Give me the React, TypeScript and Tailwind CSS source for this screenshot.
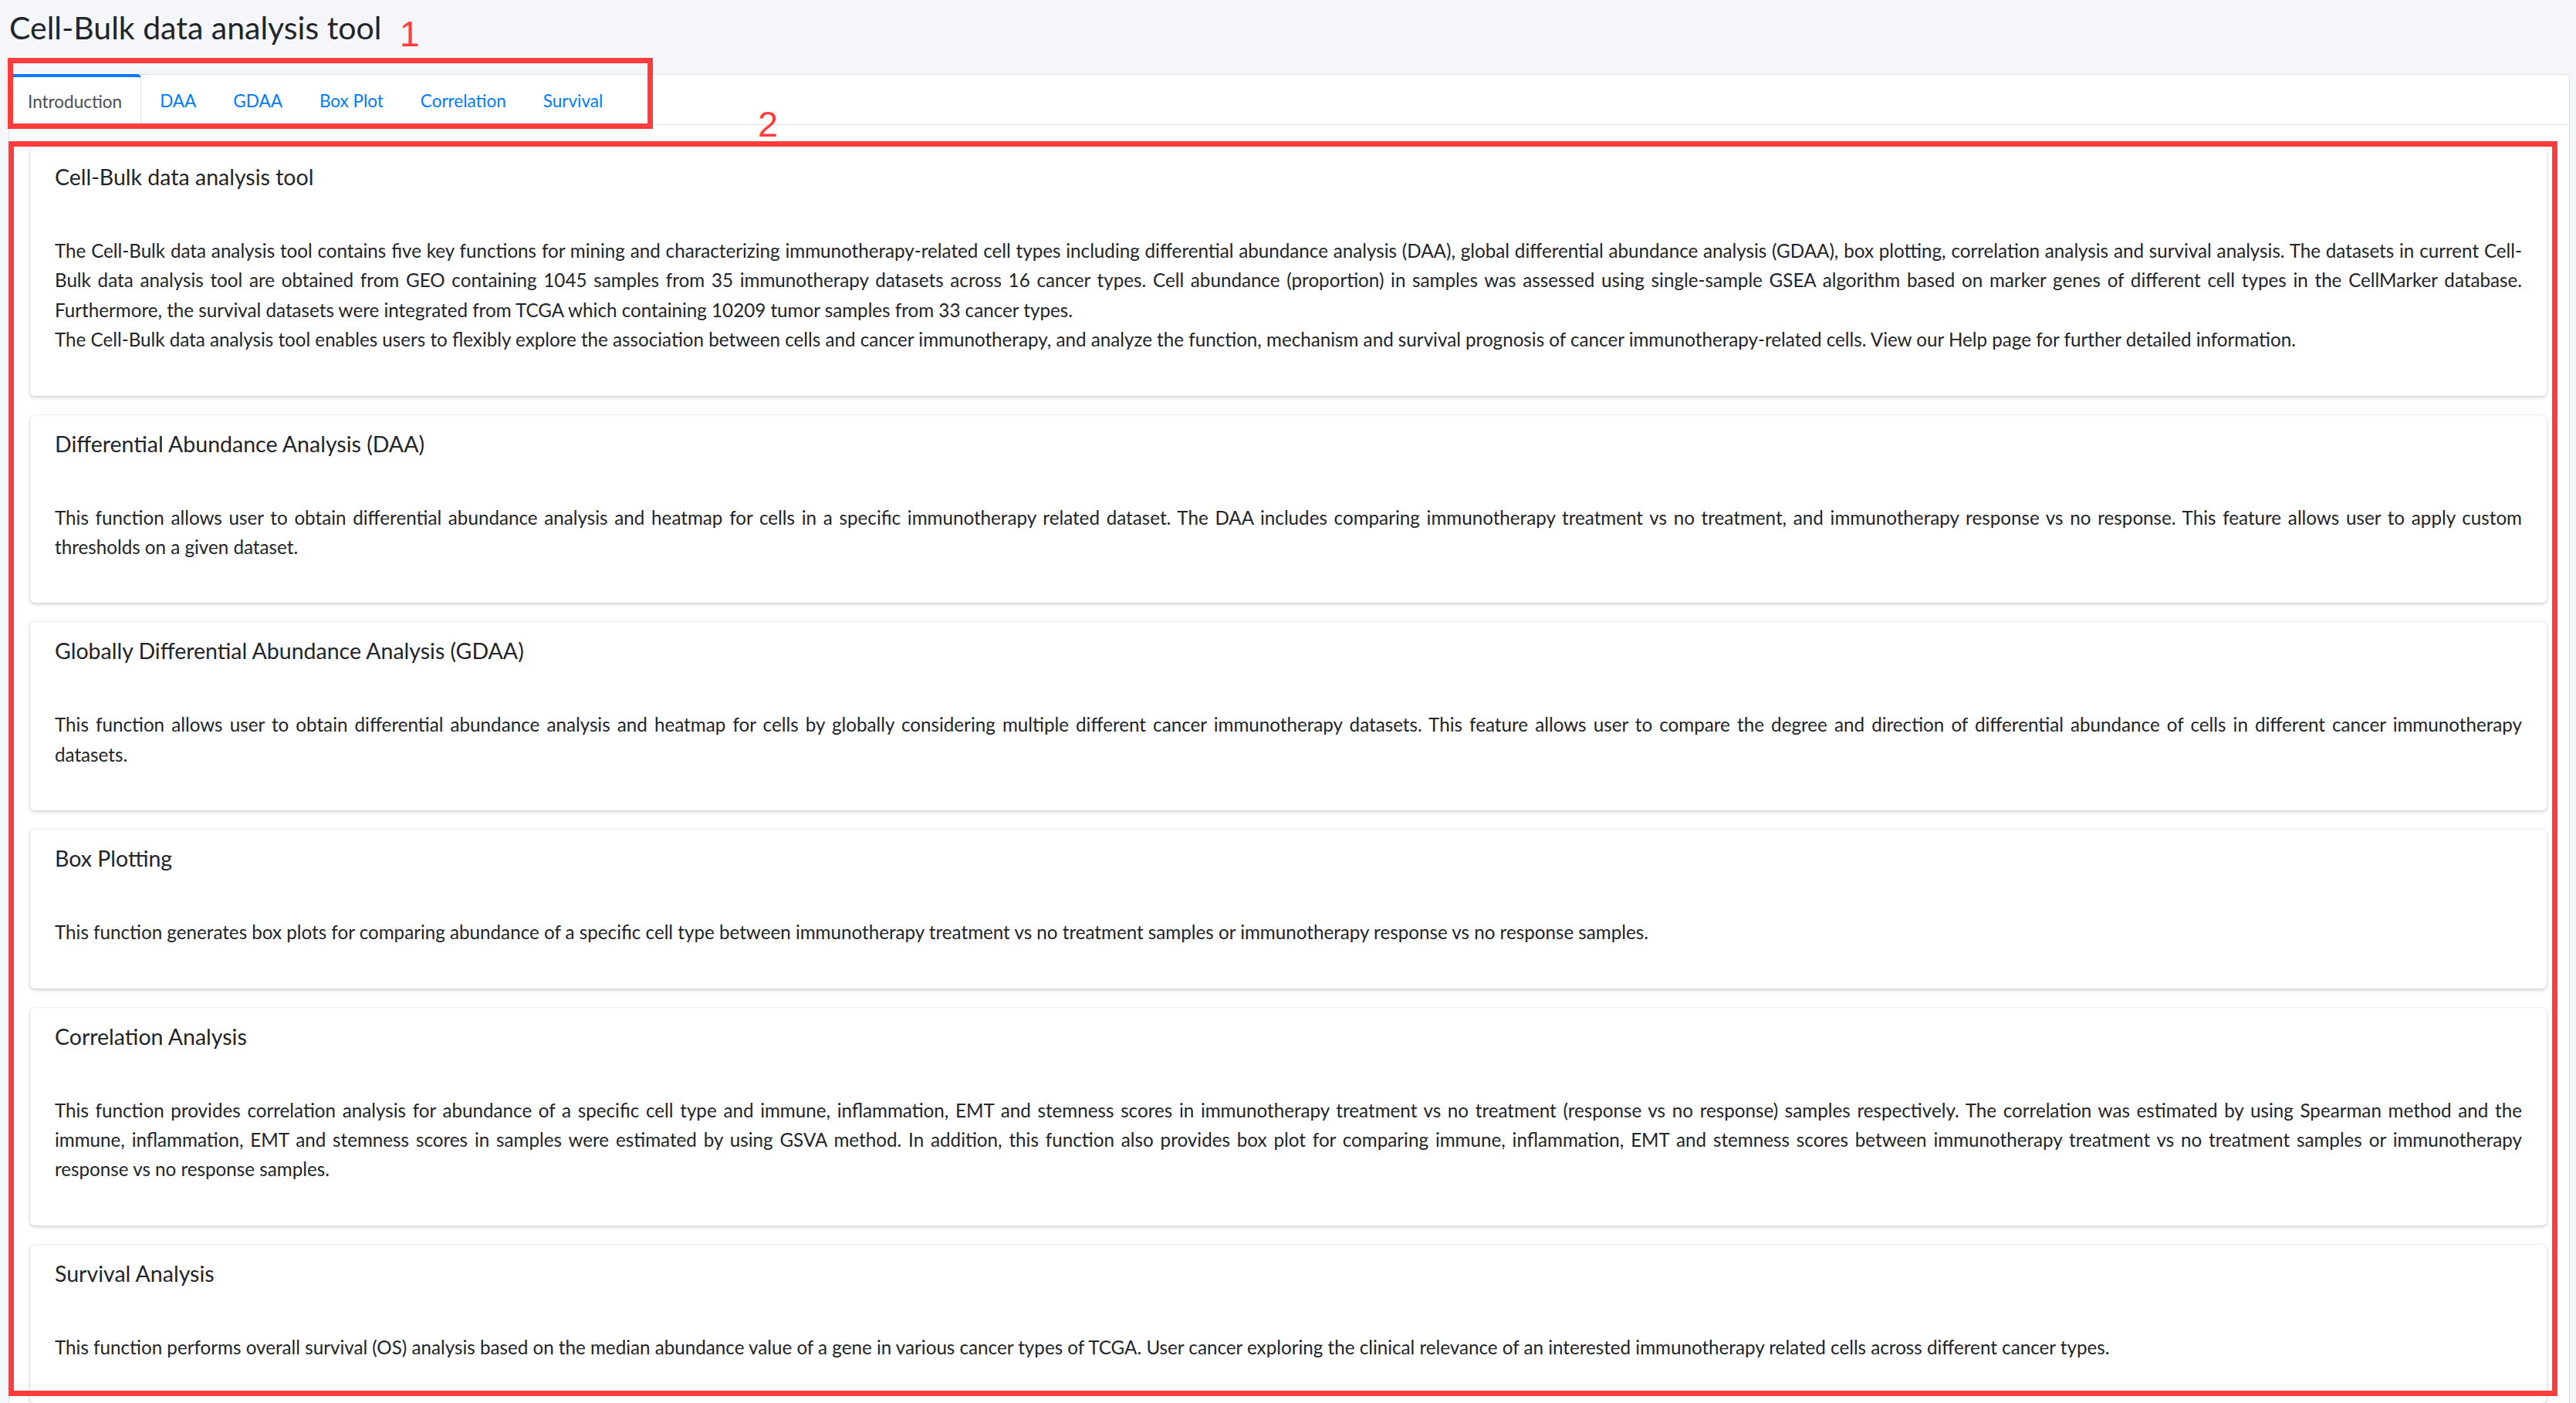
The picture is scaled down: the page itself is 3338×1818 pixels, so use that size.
import React from 'react'

type Card = {
  title: string
  // each paragraph is a list of lines, lines but the last are justified
  paragraphs: string[][]
}

const TABS = ['Introduction', 'DAA', 'GDAA', 'Box Plot', 'Correlation', 'Survival']

const CARDS: Card[] = [
  {
    title: 'Cell-Bulk data analysis tool',
    paragraphs: [
      [
        'The Cell-Bulk data analysis tool contains five key functions for mining and characterizing immunotherapy-related cell types including differential abundance analysis (DAA), global differential abundance analysis (GDAA), box plotting, correlation analysis and survival analysis. The datasets in current Cell-',
        'Bulk data analysis tool are obtained from GEO containing 1045 samples from 35 immunotherapy datasets across 16 cancer types. Cell abundance (proportion) in samples was assessed using single-sample GSEA algorithm based on marker genes of different cell types in the CellMarker database.',
        'Furthermore, the survival datasets were integrated from TCGA which containing 10209 tumor samples from 33 cancer types.',
      ],
      [
        'The Cell-Bulk data analysis tool enables users to flexibly explore the association between cells and cancer immunotherapy, and analyze the function, mechanism and survival prognosis of cancer immunotherapy-related cells. View our Help page for further detailed information.',
      ],
    ],
  },
  {
    title: 'Differential Abundance Analysis (DAA)',
    paragraphs: [
      [
        'This function allows user to obtain differential abundance analysis and heatmap for cells in a specific immunotherapy related dataset. The DAA includes comparing immunotherapy treatment vs no treatment, and immunotherapy response vs no response. This feature allows user to apply custom',
        'thresholds on a given dataset.',
      ],
    ],
  },
  {
    title: 'Globally Differential Abundance Analysis (GDAA)',
    paragraphs: [
      [
        'This function allows user to obtain differential abundance analysis and heatmap for cells by globally considering multiple different cancer immunotherapy datasets. This feature allows user to compare the degree and direction of differential abundance of cells in different cancer immunotherapy',
        'datasets.',
      ],
    ],
  },
  {
    title: 'Box Plotting',
    paragraphs: [
      [
        'This function generates box plots for comparing abundance of a specific cell type between immunotherapy treatment vs no treatment samples or immunotherapy response vs no response samples.',
      ],
    ],
  },
  {
    title: 'Correlation Analysis',
    paragraphs: [
      [
        'This function provides correlation analysis for abundance of a specific cell type and immune, inflammation, EMT and stemness scores in immunotherapy treatment vs no treatment (response vs no response) samples respectively. The correlation was estimated by using Spearman method and the',
        'immune, inflammation, EMT and stemness scores in samples were estimated by using GSVA method. In addition, this function also provides box plot for comparing immune, inflammation, EMT and stemness scores between immunotherapy treatment vs no treatment samples or immunotherapy',
        'response vs no response samples.',
      ],
    ],
  },
  {
    title: 'Survival Analysis',
    paragraphs: [
      [
        'This function performs overall survival (OS) analysis based on the median abundance value of a gene in various cancer types of TCGA. User cancer exploring the clinical relevance of an interested immunotherapy related cells across different cancer types.',
      ],
    ],
  },
]

function InfoCard({ card }: { card: Card }) {
  return (
    <div className="rounded-[6px] bg-white px-[32px] pt-[19px] pb-[53px] shadow-[0_0_2px_rgba(0,0,0,0.14),0_2px_5px_rgba(0,0,0,0.18)]">
      <h4 className="text-[28.5px] leading-[36px] text-[#212529]">{card.title}</h4>
      <div className="mt-[59px] text-[24.2px] leading-[38.4px] text-[#212529]">
        {card.paragraphs.map((lines, i) => (
          <p key={i}>
            {lines.map((line, j) => (
              <span
                key={j}
                className={
                  j < lines.length - 1
                    ? 'block whitespace-nowrap text-justify [text-align-last:justify]'
                    : 'block whitespace-nowrap'
                }
              >
                {line}
              </span>
            ))}
          </p>
        ))}
      </div>
    </div>
  )
}

export default function App() {
  return (
    <div className="relative min-h-screen overflow-hidden bg-[#f4f6f9] font-['Lato',sans-serif]">
      {/* Page header */}
      <div className="h-[96px] px-[12px] pt-[10px]">
        <h1 className="text-[41px] leading-[51px] text-[#212529]">Cell-Bulk data analysis tool</h1>
      </div>

      {/* Tabbed box */}
      <div className="ml-[11px] mr-[8px] rounded-t-[6px] border border-[#dee2e6] bg-white">
        <div className="flex h-[65px] border-b border-[#dee2e6]">
          {TABS.map((tab, i) =>
            i === 0 ? (
              <div
                key={tab}
                className="-mt-px -mb-px flex h-[67px] items-center rounded-t-[5px] border-t-[4px] border-r border-t-[#007bff] border-r-[#dee2e6] bg-white px-[24px] pt-[1px] text-[22.5px] text-[#495057]"
              >
                {tab}
              </div>
            ) : (
              <div key={tab} className="flex items-center px-[24px] pt-[3px] text-[22.5px] text-[#007bff]">
                {tab}
              </div>
            ),
          )}
        </div>

        <div className="flex flex-col gap-[25px] pt-[30px] pr-[29px] pb-[30px] pl-[27px]">
          {CARDS.map((card) => (
            <InfoCard key={card.title} card={card} />
          ))}
        </div>
      </div>

      {/* Annotation overlays */}
      <div className="pointer-events-none absolute top-[75px] left-[10px] h-[92px] w-[836px] border-[7px] border-[#ff3c3c]" />
      <div className="pointer-events-none absolute top-[183px] left-[11px] h-[1626px] w-[3303px] border-[7px] border-[#ff3c3c]" />
      <span className="pointer-events-none absolute top-[21px] left-[518px] font-['Liberation_Sans',sans-serif] text-[46px] leading-none text-[#ff3c3c]">
        1
      </span>
      <span className="pointer-events-none absolute top-[137px] left-[982px] font-['Liberation_Sans',sans-serif] text-[47px] leading-none text-[#ff3c3c]">
        2
      </span>
    </div>
  )
}
